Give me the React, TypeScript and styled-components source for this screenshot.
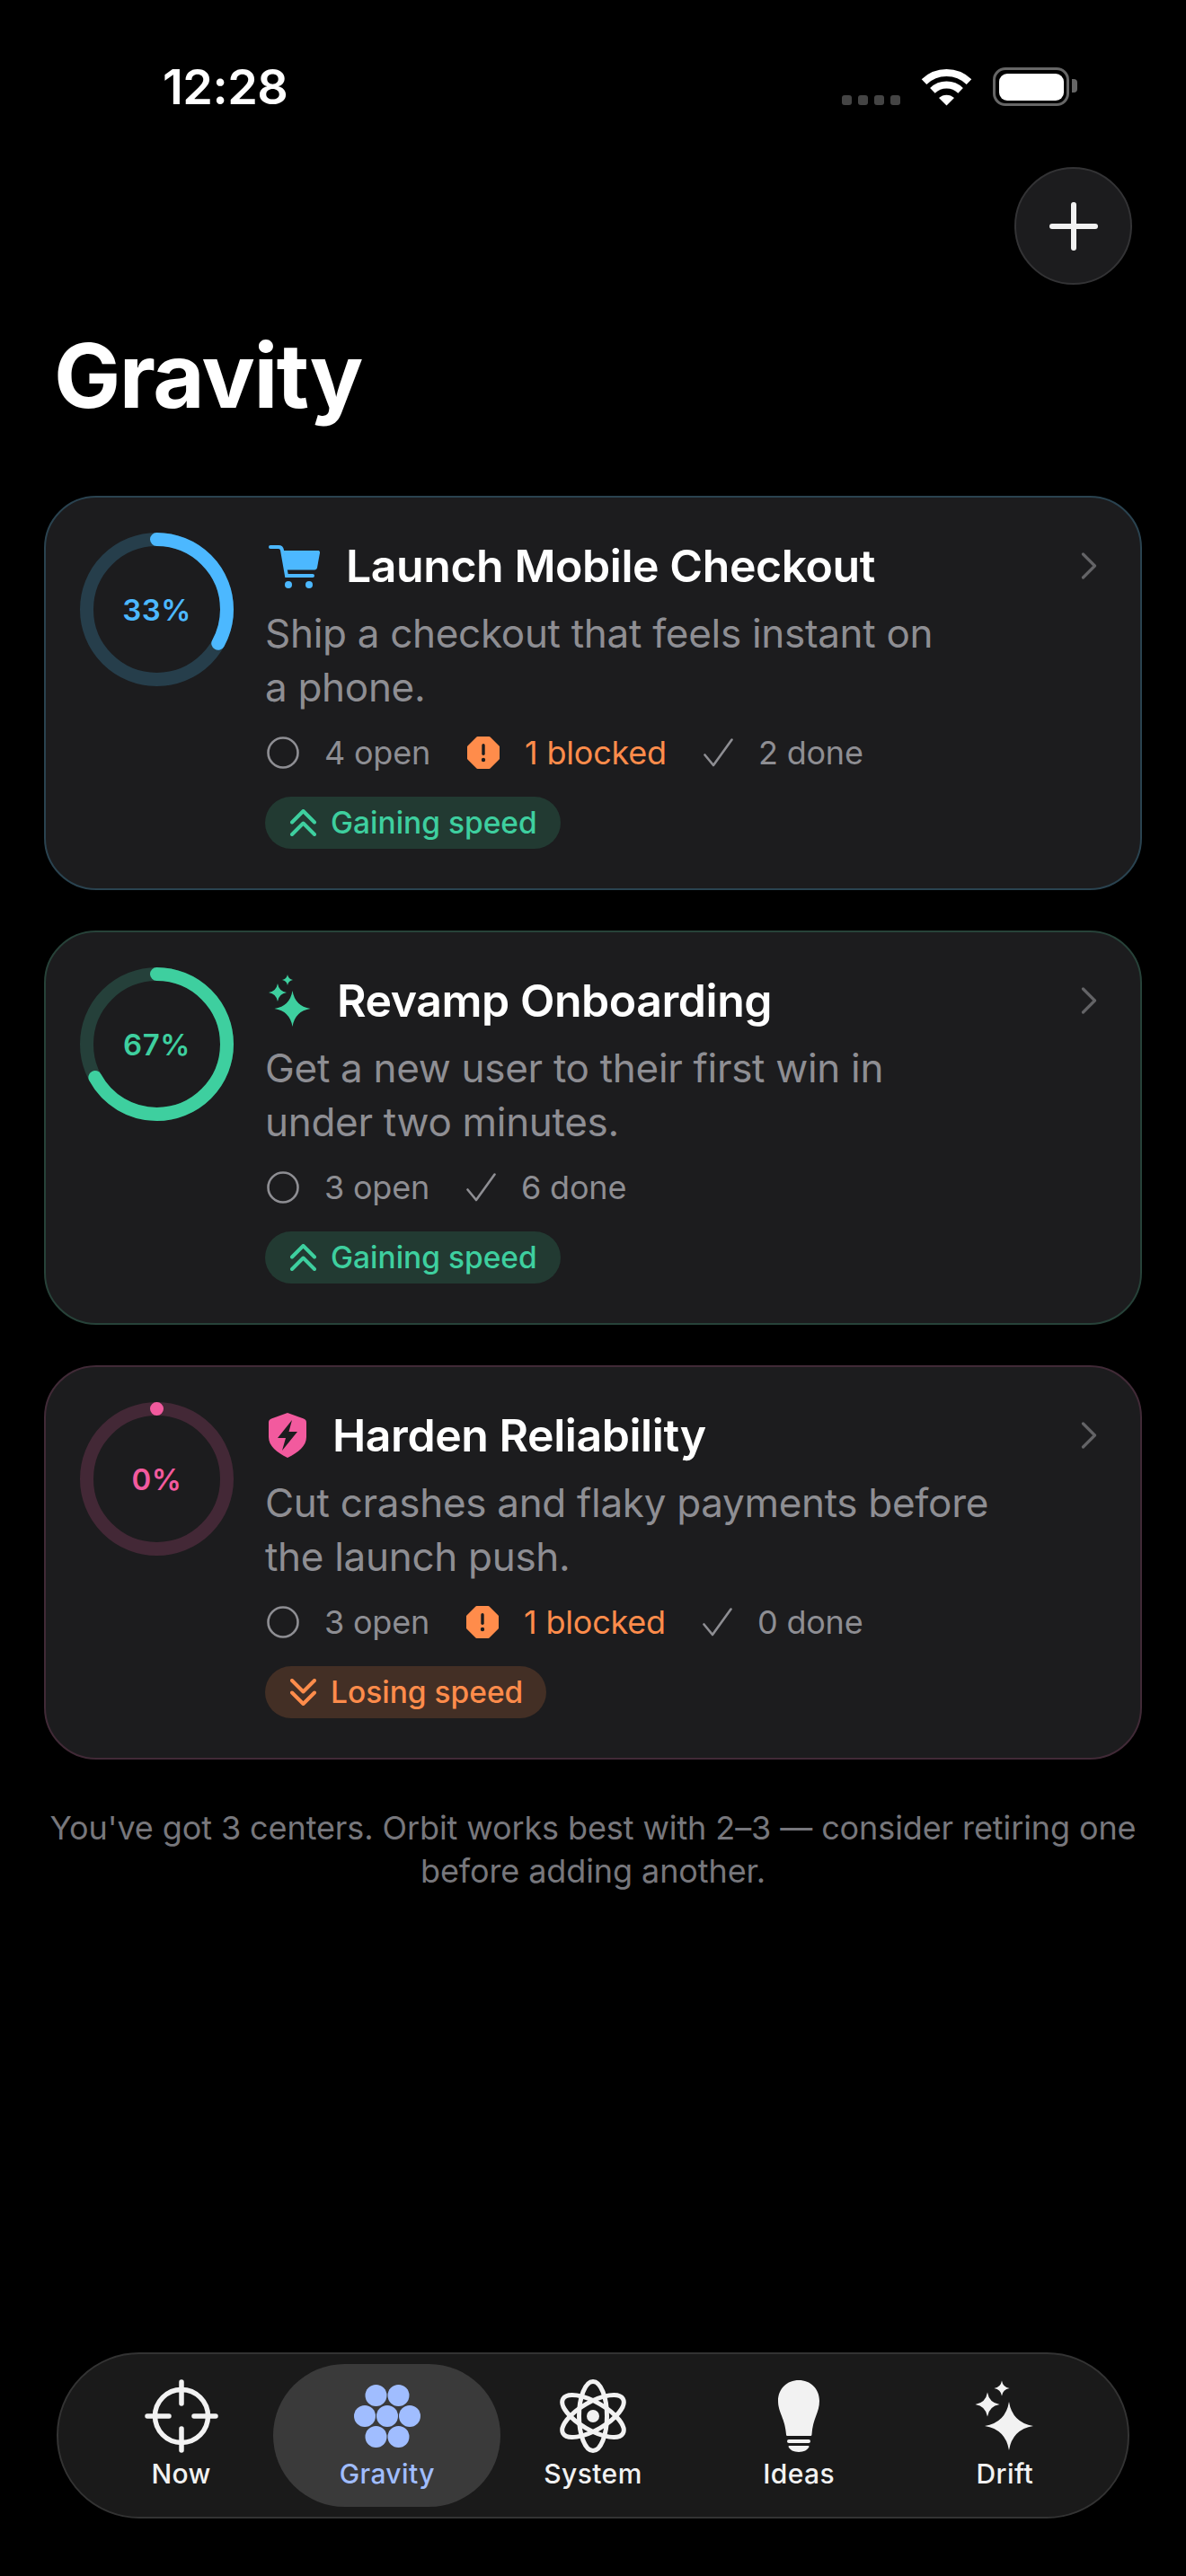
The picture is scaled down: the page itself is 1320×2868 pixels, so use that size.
import React from "react";
import styled, { createGlobalStyle } from "styled-components";

const FONT = `Inter, "Liberation Sans", sans-serif`;

const GlobalStyle = createGlobalStyle`
  html, body {
    margin: 0;
    padding: 0;
    background: #000;
  }
  * {
    box-sizing: border-box;
  }
`;

// builds a four point star with concave sides
const star = (cx: number, cy: number, r: number) => {
  const k = r * 0.14;
  return `M${cx} ${cy - r}Q${cx + k} ${cy - k} ${cx + r} ${cy}Q${cx + k} ${cy + k} ${cx} ${cy + r}Q${cx - k} ${cy + k} ${cx - r} ${cy}Q${cx - k} ${cy - k} ${cx} ${cy - r}Z`;
};

const CartIcon = ({ color }: { color: string }) => (
  <svg width="57" height="49" viewBox="0 0 57 49">
    <path d="M2 3h9c2.500 0 3.600 1 4 3.500L20 35h29" fill="none" stroke={color} strokeWidth="4" strokeLinecap="round" />
    <path d="M16.500 7H55c1.500 0 2.200 1 2 2.400l-3 16.600c-.3 1.600-1.300 2.500-3 2.500H20z" fill={color} />
    <circle cx="22" cy="45" r="4" fill={color} />
    <circle cx="45" cy="45" r="4" fill={color} />
  </svg>
);

const SparkleIcon = ({ color }: { color: string }) => (
  <svg width="47" height="58" viewBox="0 0 47 58">
    <path d={star(26.5, 38, 20)} fill={color} />
    <path d={star(10, 20, 10)} fill={color} />
    <path d={star(21, 6, 6)} fill={color} />
  </svg>
);

const ShieldIcon = ({ color }: { color: string }) => (
  <svg width="42" height="50" viewBox="0 0 42 50">
    <path d="M21 0l18 6.500c1.800.7 3 2 3 4V27c0 10-9 17-21 23C9 44 0 37 0 27V10.500c0-2 1.200-3.300 3-4z" fill={color} />
    <path d="M26 8L10 28h9l-4 14 17-21h-9.500z" fill="#1c1c1e" />
  </svg>
);

const OpenIcon = () => (
  <svg width="36" height="36" viewBox="0 0 36 36">
    <circle cx="18" cy="18" r="16.500" fill="none" stroke="#8e8e93" strokeWidth="2.600" />
  </svg>
);

const BlockedIcon = () => (
  <svg width="36" height="36" viewBox="0 0 36 36">
    <path d="M11.500 1.500h13l10 10v13l-10 10h-13l-10-10v-13z" fill="#ff8c4b" stroke="#ff8c4b" strokeWidth="3" strokeLinejoin="round" />
    <rect x="16.300" y="8" width="3.400" height="13" rx="1.700" fill="#1c1c1e" />
    <circle cx="18" cy="26" r="2.200" fill="#1c1c1e" />
  </svg>
);

const DoneIcon = () => (
  <svg width="33" height="32" viewBox="0 0 33 32">
    <path d="M1.500 18.500L11 30 31.500 1.500" fill="none" stroke="#8e8e93" strokeWidth="2.600" strokeLinecap="round" strokeLinejoin="round" />
  </svg>
);

const ChevronRight = () => (
  <svg width="18" height="30" viewBox="0 0 18 30">
    <path d="M2.500 2L15.500 15 2.500 28" fill="none" stroke="#636366" strokeWidth="3.200" strokeLinecap="round" strokeLinejoin="round" />
  </svg>
);

const DoubleChevron = ({ up, color }: { up: boolean; color: string }) => (
  <svg width="29" height="30" viewBox="0 0 29 30" style={up ? undefined : { transform: "rotate(180deg)" }}>
    <path d="M2 14.500L14.500 2 27 14.500M2 28L14.500 15.500 27 28" fill="none" stroke={color} strokeWidth="4" strokeLinecap="round" strokeLinejoin="round" />
  </svg>
);

const NowIcon = () => (
  <svg width="82" height="82" viewBox="0 0 82 82" fill="none" stroke="#f2f2f2" strokeWidth="5.500" strokeLinecap="round">
    <circle cx="41" cy="41" r="29.500" />
    <path d="M3 41h24M55 41h24M41 3v24M41 55v24" />
  </svg>
);

const GravityIcon = () => (
  <svg width="76" height="72" viewBox="0 0 76 72" fill="#a0bdff">
    <circle cx="25.500" cy="13" r="12" />
    <circle cx="50.500" cy="13" r="12" />
    <circle cx="13" cy="36" r="12" />
    <circle cx="38" cy="36" r="12" />
    <circle cx="63" cy="36" r="12" />
    <circle cx="25.500" cy="59" r="12" />
    <circle cx="50.500" cy="59" r="12" />
  </svg>
);

const SystemIcon = () => (
  <svg width="78" height="84" viewBox="0 0 78 84" fill="none" stroke="#f2f2f2" strokeWidth="5">
    <ellipse cx="39" cy="42" rx="15.500" ry="38.500" />
    <ellipse cx="39" cy="42" rx="15.500" ry="38.500" transform="rotate(60 39 42)" />
    <ellipse cx="39" cy="42" rx="15.500" ry="38.500" transform="rotate(-60 39 42)" />
    <circle cx="39" cy="42" r="7" fill="#f2f2f2" stroke="none" />
  </svg>
);

const IdeasIcon = () => (
  <svg width="46" height="80" viewBox="0 0 46 80" fill="#f2f2f2">
    <path d="M23 0c13 0 23 9.500 23 23 0 13-7.500 20-8.500 37.500-.1 1-.7 1.500-1.500 1.500H10.500c-.8 0-1.400-.5-1.500-1.500C8 43 0 36 0 23 0 9.500 10 0 23 0z" />
    <rect x="10" y="66" width="26" height="4" rx="2" />
    <path d="M12.500 73h21c.8 0 1 .5.8 1.300C33 77.800 28.500 80 23 80s-10-2.200-11.300-5.700c-.2-.8 0-1.300.8-1.300z" />
  </svg>
);

const DriftIcon = () => (
  <svg width="66" height="80" viewBox="0 0 66 80" fill="#f2f2f2">
    <path d={star(38, 51, 27)} />
    <path d={star(14, 27, 13.500)} />
    <path d={star(30, 9, 8.500)} />
  </svg>
);

const WifiIcon = () => (
  <svg width="57" height="42" viewBox="0 0 57 42">
    <path d="M3.500 15.100A36 36 0 0 1 53.500 15.100M12.900 24.800A22.500 22.500 0 0 1 44.100 24.800" fill="none" stroke="#fff" strokeWidth="8" />
    <path d="M28.500 41.500L20 33A12.500 12.500 0 0 1 37 33z" fill="#fff" />
  </svg>
);

const Ring = ({ value, color, track }: { value: number; color: string; track: string }) => {
  const r = 78;
  const length = 2 * Math.PI * r;
  return (
    <RingBox>
      <svg width="171" height="171" viewBox="0 0 171 171">
        <circle cx="85.500" cy="85.500" r={r} fill="none" stroke={track} strokeWidth="15" />
        <circle
          cx="85.500"
          cy="85.500"
          r={r}
          fill="none"
          stroke={color}
          strokeWidth="15"
          strokeLinecap="round"
          strokeDasharray={`${(length * value) / 100 + 0.01} ${length}`}
          transform="rotate(-90 85.500 85.500)"
        />
      </svg>
      <RingLabel $color={color}>{value}%</RingLabel>
    </RingBox>
  );
};

type Center = {
  title: string;
  text: string;
  value: number;
  color: string;
  track: string;
  border: string;
  icon: React.ReactNode;
  open: number;
  blocked: number;
  done: number;
  gaining: boolean;
};

const centers: Center[] = [
  {
    title: "Launch Mobile Checkout",
    text: "Ship a checkout that feels instant on\na phone.",
    value: 33,
    color: "#4cb8ff",
    track: "#263e4b",
    border: "#2a4350",
    icon: <CartIcon color="#4cb8ff" />,
    open: 4,
    blocked: 1,
    done: 2,
    gaining: true,
  },
  {
    title: "Revamp Onboarding",
    text: "Get a new user to their first win in\nunder two minutes.",
    value: 67,
    color: "#3ecf9f",
    track: "#25403a",
    border: "#274239",
    icon: <SparkleIcon color="#3ecf9f" />,
    open: 3,
    blocked: 0,
    done: 6,
    gaining: true,
  },
  {
    title: "Harden Reliability",
    text: "Cut crashes and flaky payments before\nthe launch push.",
    value: 0,
    color: "#f25a9e",
    track: "#432836",
    border: "#412a37",
    icon: <ShieldIcon color="#f25a9e" />,
    open: 3,
    blocked: 1,
    done: 0,
    gaining: false,
  },
];

const tabs = [
  { label: "Now", icon: <NowIcon /> },
  { label: "Gravity", icon: <GravityIcon />, active: true },
  { label: "System", icon: <SystemIcon /> },
  { label: "Ideas", icon: <IdeasIcon /> },
  { label: "Drift", icon: <DriftIcon /> },
];

export default function App() {
  return (
    <Screen>
      <GlobalStyle />
      <StatusBar>
        <Time>12:28</Time>
        <StatusIcons>
          <Signal>
            <i />
            <i />
            <i />
            <i />
          </Signal>
          <WifiIcon />
          <Battery>
            <BatteryFill />
          </Battery>
        </StatusIcons>
      </StatusBar>

      <ActionRow>
        <AddButton>
          <svg width="54" height="54" viewBox="0 0 54 54">
            <path d="M27 3v48M3 27h48" fill="none" stroke="#f2f2f2" strokeWidth="6" strokeLinecap="round" />
          </svg>
        </AddButton>
      </ActionRow>

      <PageTitle>Gravity</PageTitle>

      <CardList>
        {centers.map((c) => (
          <Card key={c.title} $border={c.border}>
            <Ring value={c.value} color={c.color} track={c.track} />
            <CardBody>
              <TitleRow>
                {c.icon}
                <CardTitle>{c.title}</CardTitle>
              </TitleRow>
              <Description>{c.text}</Description>
              <MetaRow>
                <MetaItem>
                  <OpenIcon />
                  {c.open} open
                </MetaItem>
                {c.blocked > 0 && (
                  <MetaItem $warn>
                    <BlockedIcon />
                    {c.blocked} blocked
                  </MetaItem>
                )}
                <MetaItem>
                  <DoneIcon />
                  {c.done} done
                </MetaItem>
              </MetaRow>
              <SpeedPill $gaining={c.gaining}>
                <DoubleChevron up={c.gaining} color={c.gaining ? "#3ecf9f" : "#ff8c4b"} />
                {c.gaining ? "Gaining speed" : "Losing speed"}
              </SpeedPill>
            </CardBody>
            <ChevronBox>
              <ChevronRight />
            </ChevronBox>
          </Card>
        ))}
      </CardList>

      <Note>
        You've got 3 centers. Orbit works best with 2–3 — consider retiring one
        <br />
        before adding another.
      </Note>

      <TabBar>
        {tabs.map((t) => (
          <Tab key={t.label} $active={!!t.active}>
            <TabIcon>{t.icon}</TabIcon>
            <TabLabel $active={!!t.active}>{t.label}</TabLabel>
          </Tab>
        ))}
      </TabBar>
    </Screen>
  );
}

const Screen = styled.div`
  width: 1320px;
  height: 2868px;
  background: #000;
  color: #fff;
  font-family: ${FONT};
  display: flex;
  flex-direction: column;
  overflow: hidden;
`;

const StatusBar = styled.div`
  height: 186px;
  padding: 72px 130px 0 181px;
  display: flex;
  justify-content: space-between;
  align-items: flex-start;
`;

const Time = styled.div`
  font-size: 54px;
  line-height: 50px;
  font-weight: 600;
  letter-spacing: -0.5px;
`;

const StatusIcons = styled.div`
  display: flex;
  align-items: flex-end;
  gap: 23px;
  margin-top: 3px;
`;

const Signal = styled.div`
  display: flex;
  gap: 7px;
  padding-bottom: 1px;

  i {
    display: block;
    width: 11px;
    height: 11px;
    border-radius: 3px;
    background: #444;
  }
`;

const Battery = styled.div`
  position: relative;
  width: 85px;
  height: 43px;
  border: 3.5px solid #666;
  border-radius: 14px;
  padding: 3.5px;

  &::after {
    content: "";
    position: absolute;
    right: -12px;
    top: 10px;
    width: 6px;
    height: 15px;
    border-radius: 0 4px 4px 0;
    background: #666;
  }
`;

const BatteryFill = styled.div`
  width: 100%;
  height: 100%;
  border-radius: 9px;
  background: #fff;
`;

const ActionRow = styled.div`
  padding-right: 60px;
  display: flex;
  justify-content: flex-end;
`;

const AddButton = styled.div`
  width: 131px;
  height: 131px;
  border-radius: 50%;
  background: #1c1c1e;
  border: 2.500px solid #333335;
  display: flex;
  align-items: center;
  justify-content: center;
`;

const PageTitle = styled.h1`
  margin: 41px 0 0 60px;
  font-size: 99px;
  line-height: 120px;
  font-weight: 700;
  letter-spacing: -1.5px;
`;

const CardList = styled.div`
  margin-top: 74px;
  padding: 0 49px 0 49px;
  display: flex;
  flex-direction: column;
  gap: 45px;
`;

const Card = styled.div<{ $border: string }>`
  height: 439px;
  padding: 39px 48px 0 38px;
  border-radius: 58px;
  background: #1c1c1e;
  border: 2.500px solid ${(p) => p.$border};
  display: flex;
  gap: 35px;
`;

const RingBox = styled.div`
  width: 171px;
  height: 171px;
  flex: none;
  display: grid;
  place-items: center;

  > * {
    grid-area: 1 / 1;
  }
`;

const RingLabel = styled.span<{ $color: string }>`
  font-size: 33px;
  font-weight: 600;
  letter-spacing: 0.5px;
  color: ${(p) => p.$color};
`;

const CardBody = styled.div`
  flex: 1;
  min-width: 0;
  display: flex;
  flex-direction: column;
  align-items: flex-start;
`;

const TitleRow = styled.div`
  height: 66px;
  margin-top: 4px;
  padding-left: 4px;
  display: flex;
  align-items: center;
  gap: 29px;
`;

const CardTitle = styled.div`
  font-size: 50px;
  line-height: 60px;
  font-weight: 560;
  letter-spacing: -0.45px;
`;

const Description = styled.div`
  margin-top: 12px;
  font-size: 44px;
  line-height: 60px;
  letter-spacing: -0.3px;
  color: #8e8e93;
  white-space: pre-line;
`;

const MetaRow = styled.div`
  margin-top: 19px;
  padding-left: 2px;
  display: flex;
  align-items: center;
  gap: 41px;
`;

const MetaItem = styled.div<{ $warn?: boolean }>`
  display: flex;
  align-items: center;
  gap: 28px;
  font-size: 36px;
  line-height: 48px;
  letter-spacing: -0.2px;
  color: ${(p) => (p.$warn ? "#ff8c4b" : "#8e8e93")};
`;

const SpeedPill = styled.div<{ $gaining: boolean }>`
  margin-top: 25px;
  height: 58px;
  padding: 0 26px 0 28px;
  border-radius: 29px;
  display: flex;
  align-items: center;
  gap: 16px;
  font-size: 33.5px;
  font-weight: 550;
  color: ${(p) => (p.$gaining ? "#3ecf9f" : "#ff8c4b")};
  background: ${(p) => (p.$gaining ? "#223a32" : "#432f25")};
`;

const ChevronBox = styled.div`
  flex: none;
  padding-top: 22px;
`;

const Note = styled.div`
  margin-top: 52px;
  text-align: center;
  font-size: 36px;
  line-height: 48px;
  letter-spacing: -0.1px;
  color: #77777c;
`;

const TabBar = styled.div`
  margin: auto 63px 64px 63px;
  height: 185px;
  padding: 11px 22px;
  border-radius: 92px;
  background: #1a1a1a;
  border: 2.500px solid #333;
  display: grid;
  grid-template-columns: repeat(5, 1fr);
`;

const Tab = styled.div<{ $active: boolean }>`
  margin: 0 ${(p) => (p.$active ? "-12px" : "0")};
  border-radius: 80px;
  background: ${(p) => (p.$active ? "#3a3a3a" : "transparent")};
  display: flex;
  flex-direction: column;
  align-items: center;
  padding-top: 16px;
`;

const TabIcon = styled.div`
  height: 84px;
  display: flex;
  align-items: center;
  justify-content: center;
`;

const TabLabel = styled.div<{ $active: boolean }>`
  margin-top: 3px;
  font-size: 30px;
  line-height: 38px;
  font-weight: 450;
  letter-spacing: 0.4px;
  color: ${(p) => (p.$active ? "#a0bdff" : "#f2f2f2")};
`;
